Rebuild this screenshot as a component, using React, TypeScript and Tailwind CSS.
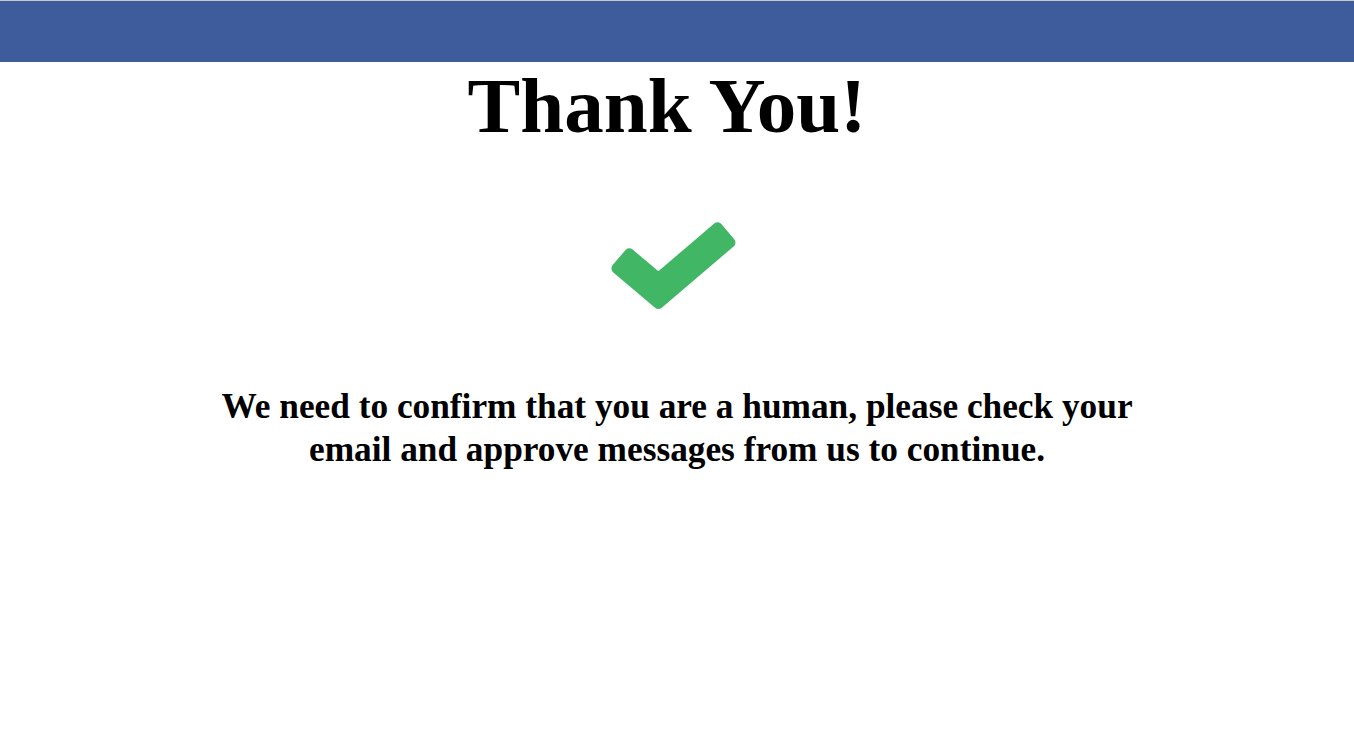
const CheckMark = () => (
  <svg width="156" height="114" viewBox="0 0 150 110" className="block">
    <polygon
      points="30.9,42.0 59,65.6 116.1,16.9 128.3,31.4 59,90.4 18.7,56.4"
      fill="#41b765"
      stroke="#41b765"
      strokeWidth="10"
      strokeLinejoin="round"
    />
  </svg>
);

const App = () => {
  return (
    <div
      className="min-h-[730px] bg-white text-black"
      style={{ fontFamily: '"Liberation Serif", "Times New Roman", serif' }}
    >
      {/* Top bar */}
      <header className="h-[62px] border-t border-[#c9c9c9] bg-[#3e5c9c]" />

      <main className="flex flex-col items-center">
        <h1 className="pr-[20px] text-[79px] font-bold leading-[86px] pt-[1px]">
          Thank You!
        </h1>

        <div className="mt-[61px] pr-[4px]">
          <CheckMark />
        </div>

        <p className="mt-[61px] max-w-[960px] text-center text-[35.3px] font-bold leading-[43px]">
          We need to confirm that you are a human, please check your email and
          approve messages from us to continue.
        </p>
      </main>
    </div>
  );
};

export default App;
